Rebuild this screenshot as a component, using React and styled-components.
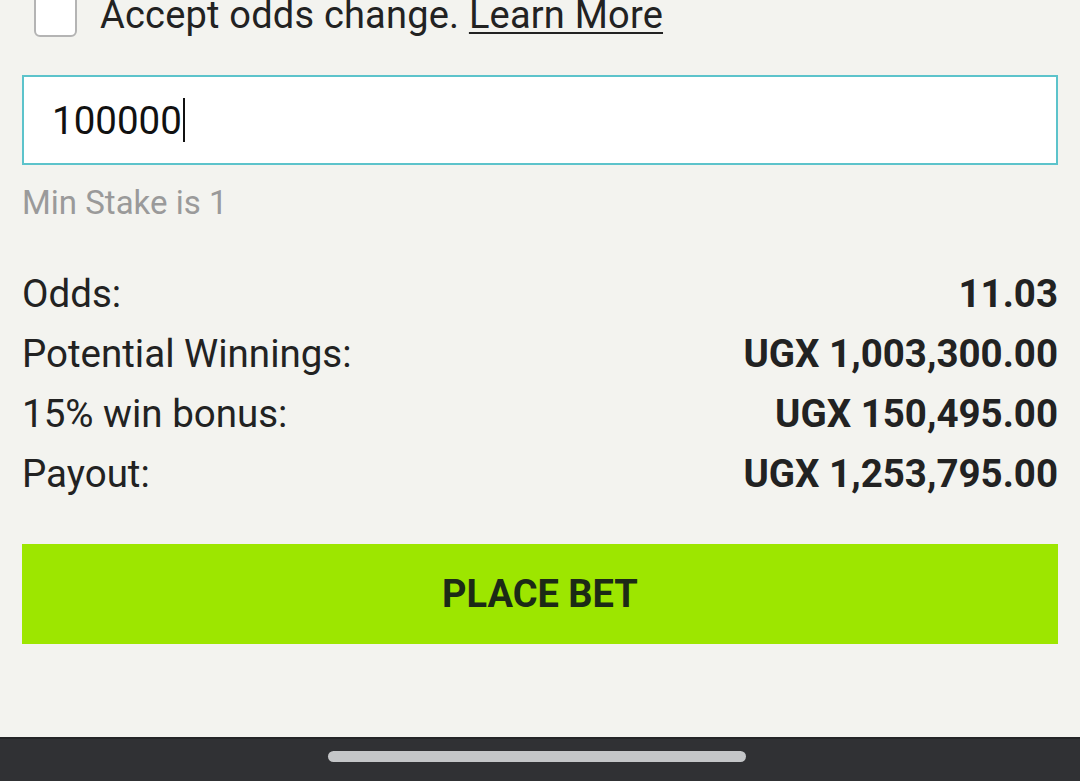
import styled, { createGlobalStyle } from "styled-components";

const GlobalStyle = createGlobalStyle`
  html, body {
    margin: 0;
    padding: 0;
    background: #f3f3ef;
  }
  body {
    font-family: Roboto, "Liberation Sans", sans-serif;
    overflow: hidden;
  }
`;

const Screen = styled.div`
  height: 781px;
  display: flex;
  flex-direction: column;
  background: #f3f3ef;
`;

const Slip = styled.div`
  flex: 1;
  display: flex;
  flex-direction: column;
  padding: 0 22px;
`;

const AcceptRow = styled.label`
  display: flex;
  align-items: center;
  gap: 23px;
  margin-top: -8px;
  padding-left: 12px;
  font-size: 38px;
  letter-spacing: 0.2px;
  color: #222;
  line-height: 46px;
`;

const Box = styled.span`
  width: 43px;
  height: 44px;
  box-sizing: border-box;
  border: 2px solid #b4b4b4;
  border-radius: 6px;
  background: #fff;
  flex: none;
`;

const Learn = styled.a`
  color: #222;
  text-decoration: underline;
  text-underline-offset: 4px;
  text-decoration-thickness: 2px;
`;

const StakeBox = styled.div`
  margin-top: 37px;
  height: 90px;
  box-sizing: border-box;
  border: 2px solid #5cc3cb;
  background: #fff;
  display: flex;
  align-items: center;
  padding-left: 28px;
  font-size: 38.5px;
  color: #111;
`;

const Caret = styled.span`
  display: inline-block;
  width: 2px;
  height: 44px;
  background: #111;
  margin-left: 1px;
`;

const Hint = styled.div`
  margin-top: 20px;
  font-size: 33px;
  color: #9a9a9a;
  line-height: 36px;
`;

const Summary = styled.div`
  margin-top: 42px;
  display: flex;
  flex-direction: column;
`;

const Row = styled.div`
  display: flex;
  justify-content: space-between;
  align-items: center;
  height: 60px;
  font-size: 38.5px;
  color: #222;
`;

const Value = styled.span`
  font-weight: 700;
  color: #222;
`;

const PlaceBet = styled.button`
  margin-top: 41px;
  height: 100px;
  border: none;
  background: #9de600;
  font-family: Roboto, "Liberation Sans", sans-serif;
  font-weight: 700;
  font-size: 38px;
  color: #1c2a16;
`;

const NavBar = styled.div`
  height: 44px;
  flex: none;
  background: #303134;
  border-top: 2px solid #242527;
  display: flex;
  justify-content: center;
  padding: 12px 6px 0 0;
  box-sizing: border-box;
`;

const Handle = styled.div`
  width: 418px;
  height: 11px;
  border-radius: 6px;
  background: #c4c6c8;
`;

const rows = [
  ["Odds:", "11.03"],
  ["Potential Winnings:", "UGX 1,003,300.00"],
  ["15% win bonus:", "UGX 150,495.00"],
  ["Payout:", "UGX 1,253,795.00"],
];

export default function App() {
  return (
    <Screen>
      <GlobalStyle />
      <Slip>
        <AcceptRow>
          <Box />
          <span>
            Accept odds change. <Learn>Learn More</Learn>
          </span>
        </AcceptRow>
        <StakeBox>
          100000
          <Caret />
        </StakeBox>
        <Hint>Min Stake is 1</Hint>
        <Summary>
          {rows.map(([label, value]) => (
            <Row key={label}>
              <span>{label}</span>
              <Value>{value}</Value>
            </Row>
          ))}
        </Summary>
        <PlaceBet>PLACE BET</PlaceBet>
      </Slip>
      <NavBar>
        <Handle />
      </NavBar>
    </Screen>
  );
}
